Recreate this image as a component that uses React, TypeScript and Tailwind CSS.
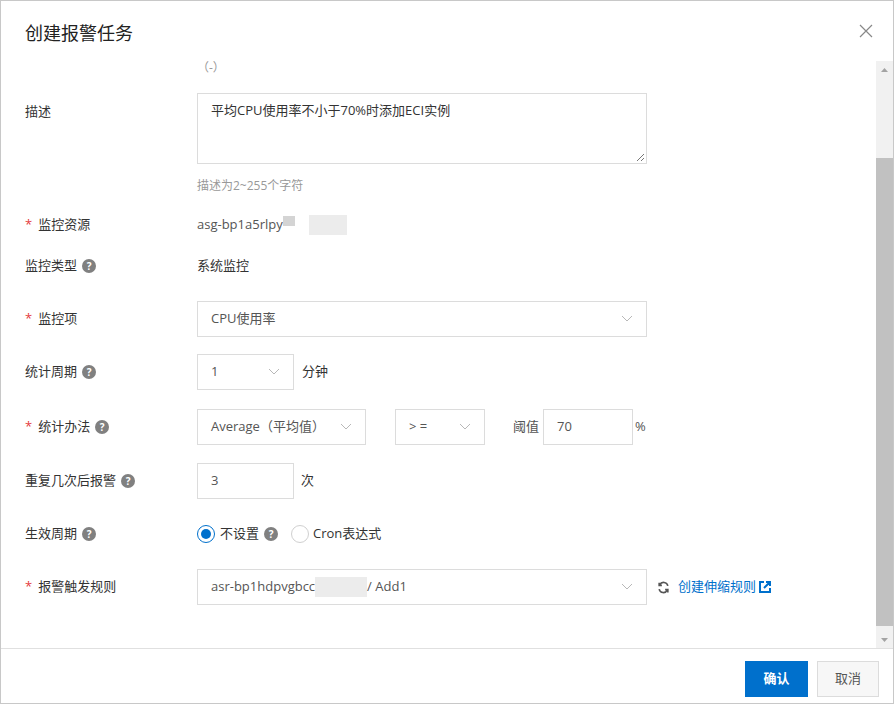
import React from "react";

const Q = () => (
  <span className="inline-flex items-center justify-center w-[14px] h-[14px] rounded-full bg-[#808080] text-white text-[10px] font-bold ml-[5px] leading-none">?</span>
);
const Chev = () => (
  <svg width="12" height="8" viewBox="0 0 12 8" fill="none" stroke="#b8b8b8" strokeWidth="1"><path d="M1 1l5 5 5-5" /></svg>
);
const Star = () => <span className="text-[#e4393c] mr-[6px]">*</span>;

function Row({ label, top, children, h }: { label: React.ReactNode; top: number; children?: React.ReactNode; h: number }) {
  return (
    <div className="flex" style={{ marginTop: top, height: h }}>
      <div className="w-[172px] flex items-center text-[13px] text-[#333]">{label}</div>
      <div className="flex items-center flex-1">{children}</div>
    </div>
  );
}

const Box = ({ w, children, chev = true }: { w: number; children: React.ReactNode; chev?: boolean }) => (
  <div className="h-[36px] border border-[#dcdcdc] flex items-center justify-between px-[13px] text-[13px] text-[#555]" style={{ width: w }}>
    <span>{children}</span>
    {chev && <Chev />}
  </div>
);

export default function App() {
  return (
    <div className="w-[894px] h-[704px] bg-white border border-[#c8c8c8] flex flex-col overflow-hidden" style={{ fontFamily: '"Open Sans","Noto Sans CJK SC",sans-serif' }}>
      <div className="h-[60px] flex items-center justify-between pl-[24px] pr-[20px] shrink-0">
        <span className="text-[18px] text-[#222] mt-[4px]">创建报警任务</span>
        <svg width="14" height="14" viewBox="0 0 14 14" stroke="#888" strokeWidth="1.2"><path d="M1 1l12 12M13 1L1 13" /></svg>
      </div>
      <div className="flex flex-1 min-h-0">
        <div className="flex-1 pl-[24px]">
          <div className="pl-[172px] text-[12px] text-[#999] mt-[0px] h-[14px] leading-[14px]">（-）</div>
          <div className="flex mt-[18px]">
            <div className="w-[172px] text-[13px] text-[#333] pt-[9px]">描述</div>
            <div>
              <div className="w-[450px] h-[71px] border border-[#dcdcdc] px-[13px] py-[7px] text-[13px] text-[#333] relative">
                平均CPU使用率不小于70%时添加ECI实例
                <svg className="absolute right-[2px] bottom-[2px]" width="8" height="8" viewBox="0 0 8 8" stroke="#777"><path d="M1 8L8 1M5 8L8 5" /></svg>
              </div>
              <div className="text-[12px] text-[#999] mt-[13px]">描述为2~255个字符</div>
            </div>
          </div>
          <Row label={<><Star />监控资源</>} top={20} h={20}>
            <span className="text-[13px] text-[#555]">asg-bp1a5rlpy</span>
            <span className="w-[12px] h-[10px] bg-[#d4d4d4] -mt-[8px]"></span>
            <span className="w-[14px]"></span>
            <span className="w-[38px] h-[20px] bg-[#ececec]"></span>
          </Row>
          <Row label={<>监控类型<Q /></>} top={21} h={20}>
            <span className="text-[13px] text-[#333]">系统监控</span>
          </Row>
          <Row label={<><Star />监控项</>} top={25} h={36}>
            <Box w={450}>CPU使用率</Box>
          </Row>
          <Row label={<>统计周期<Q /></>} top={17} h={36}>
            <Box w={97}>1</Box>
            <span className="ml-[8px] text-[13px] text-[#333]">分钟</span>
          </Row>
          <Row label={<><Star />统计办法<Q /></>} top={19} h={36}>
            <Box w={169}>Average（平均值）</Box>
            <div className="ml-[29px]"><Box w={90}>&gt; =</Box></div>
            <span className="ml-[28px] mr-[4px] text-[13px] text-[#555]">阈值</span>
            <div className="h-[36px] w-[90px] border border-[#dcdcdc] flex items-center px-[13px] text-[13px] text-[#555]">70</div>
            <span className="ml-[2px] text-[13px] text-[#555]">%</span>
          </Row>
          <Row label={<>重复几次后报警<Q /></>} top={18} h={36}>
            <Box w={97} chev={false}>3</Box>
            <span className="ml-[7px] text-[13px] text-[#333]">次</span>
          </Row>
          <Row label={<>生效周期<Q /></>} top={17} h={36}>
            <span className="w-[18px] h-[18px] rounded-full border border-[#0070cc] flex items-center justify-center"><span className="w-[10px] h-[10px] rounded-full bg-[#0070cc]" /></span>
            <span className="ml-[5px] text-[13px] text-[#333] flex items-center">不设置<Q /></span>
            <span className="ml-[13px] w-[18px] h-[18px] rounded-full border border-[#d0d0d0]" />
            <span className="ml-[4px] text-[13px] text-[#333]">Cron表达式</span>
          </Row>
          <Row label={<><Star />报警触发规则</>} top={17} h={36}>
            <div className="h-[36px] w-[450px] border border-[#dcdcdc] flex items-center justify-between px-[13px] text-[13px] text-[#555]">
              <span className="flex items-center">asr-bp1hdpvgbcc<span className="inline-block w-[52px] h-[20px] bg-[#ececec]" /> / Add1</span>
              <Chev />
            </div>
            <svg className="ml-[10px]" width="13" height="13" viewBox="0 0 24 24" fill="none" stroke="#555" strokeWidth="3"><path d="M20 9a8 8 0 0 0-15-2M4 15a8 8 0 0 0 15 2" /><path d="M4 3v5h5M20 21v-5h-5" /></svg>
            <span className="ml-[8px] text-[13px] text-[#0070cc]">创建伸缩规则</span>
            <svg className="ml-[3px]" width="12" height="12" viewBox="0 0 12 12" fill="none" stroke="#0070cc" strokeWidth="2"><path d="M5 1H1v10h10V7M7 1h4v4M11 1L5 7" /></svg>
          </Row>
        </div>
        <div className="w-[17px] bg-[#f1f1f1] flex flex-col items-center">
          <div className="h-[17px] flex items-center justify-center"><svg width="7" height="4"><path d="M0 4L3.5 0 7 4z" fill="#a3a3a3" /></svg></div>
          <div className="flex-1 flex flex-col pt-[80px] pb-[5px] w-full">
            <div className="flex-1 bg-[#c1c1c1]" />
          </div>
          <div className="h-[17px] flex items-center justify-center"><svg width="7" height="4"><path d="M0 0L3.5 4 7 0z" fill="#a3a3a3" /></svg></div>
        </div>
      </div>
      <div className="h-[55px] border-t border-[#e0e0e0] flex items-center justify-end gap-[9px] pr-[14px] pt-[6px] shrink-0">
        <button className="w-[63px] h-[36px] bg-[#0070cc] text-white text-[13px] font-bold">确认</button>
        <button className="w-[62px] h-[36px] border border-[#dcdcdc] bg-[#f7f7f7] text-[#555] text-[13px]">取消</button>
      </div>
    </div>
  );
}
